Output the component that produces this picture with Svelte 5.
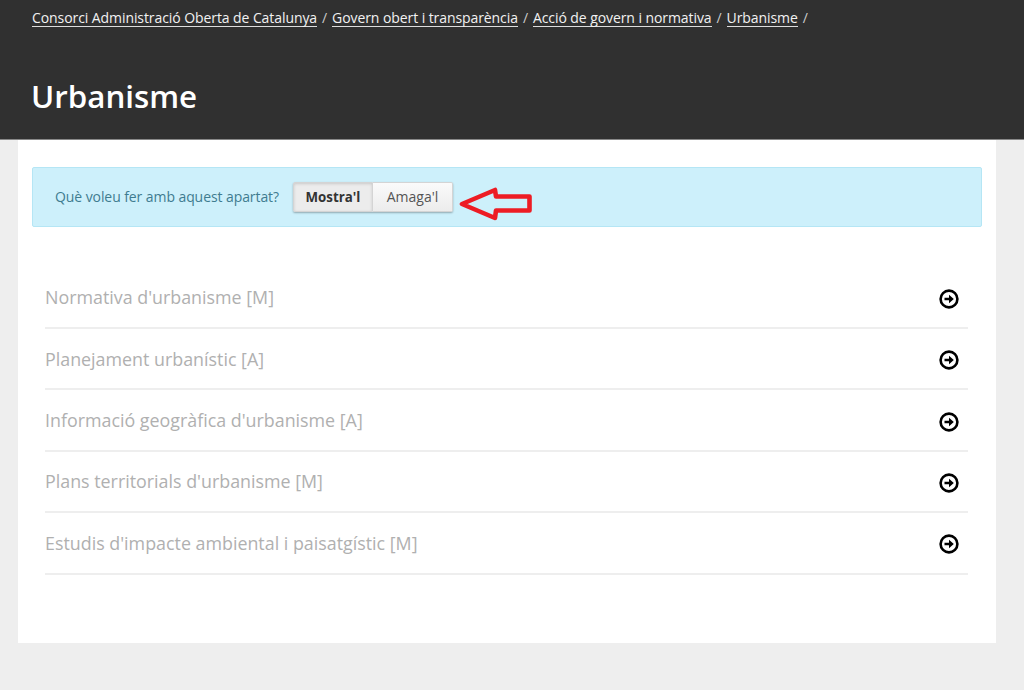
<script>
	const crumbs = [
		'Consorci Administració Oberta de Catalunya',
		'Govern obert i transparència',
		'Acció de govern i normativa',
		'Urbanisme'
	]

	const items = [
		"Normativa d'urbanisme [M]",
		'Planejament urbanístic [A]',
		"Informació geogràfica d'urbanisme [A]",
		"Plans territorials d'urbanisme [M]",
		"Estudis d'impacte ambiental i paisatgístic [M]"
	]
</script>

<header class="page-header">
	<nav class="breadcrumb">
		{#each crumbs as crumb}
			<a href="#top" class="crumb">{crumb}</a>
			<span class="sep">/</span>
		{/each}
	</nav>
	<h1>Urbanisme</h1>
</header>

<main class="content">
	<div class="notice">
		<span class="question">Què voleu fer amb aquest apartat?</span>
		<div class="btn-group">
			<button class="btn active">Mostra'l</button>
			<button class="btn">Amaga'l</button>
		</div>
		<svg class="arrow" width="78" height="40" viewBox="0 0 78 40" aria-hidden="true">
			<path d="M5 19 L38 5 L39 11.5 L72.5 11.5 L72.5 25.5 L39 25.5 L38 33 Z" fill="none" stroke="#ed1c24" stroke-width="4.6" stroke-linejoin="round" />
		</svg>
	</div>

	<ul class="list">
		{#each items as item}
			<li class="row">
				<span>{item}</span>
				<svg class="go" width="20" height="20" viewBox="0 0 20 20" aria-hidden="true">
					<circle cx="10" cy="10" r="8.4" fill="none" stroke="#000" stroke-width="2.6" />
					<path d="M5.5 8.7 H10 V5.8 L14.8 10 L10 14.2 V11.3 H5.5 Z" fill="#000" />
				</svg>
			</li>
		{/each}
	</ul>
</main>

<style>
	:global(body) {
		background: #eeeeee;
		font-family: 'Open Sans', sans-serif;
	}

	.page-header {
		box-sizing: border-box;
		height: 140px;
		padding: 9px 32px 0;
		background: #303030;
		border-bottom: 1px solid #888;
		color: #fff;
	}

	.breadcrumb {
		display: flex;
		align-items: flex-start;
		font-size: 14px;
		line-height: 17px;
		letter-spacing: -0.08px;
	}

	.crumb {
		color: #f2f2f2;
		text-decoration: none;
		border-bottom: 1px solid #ddd;
	}

	.sep {
		margin: 0 5px 0 5px;
		color: #ccc;
	}

	h1 {
		margin: 47px 0 0 -1px;
		font-size: 31.3px;
		line-height: 44px;
		font-weight: 600;
	}

	.content {
		box-sizing: border-box;
		width: 978px;
		height: 503px;
		margin-left: 18px;
		padding: 27px 14px 0;
		background: #fff;
	}

	.notice {
		box-sizing: border-box;
		display: flex;
		align-items: center;
		height: 60px;
		padding: 0 0 1px 22px;
		background: #cdf0fb;
		border: 1px solid #b5e6f5;
		border-radius: 2px;
	}

	.question {
		font-size: 14px;
		letter-spacing: -0.08px;
		color: #3f7c90;
		margin-right: 14px;
	}

	.btn-group {
		display: flex;
		box-shadow: 0 1px 2px rgba(0, 0, 0, 0.3);
		border-radius: 2px;
	}

	.btn {
		box-sizing: border-box;
		height: 30px;
		padding: 0;
		font-family: inherit;
		font-size: 14px;
		color: #555;
		background: linear-gradient(#fafafa, #ececec);
		border: 1px solid #d4d4d4;
		border-left: 0;
		border-radius: 0 2px 2px 0;
		width: 80px;
	}

	.btn.active {
		font-size: 13.3px;
		font-weight: 700;
		color: #333;
		background: #ececec;
		border-left: 1px solid #d4d4d4;
		border-radius: 2px 0 0 2px;
		box-shadow: inset 0 1px 3px rgba(0, 0, 0, 0.15);
	}

	.arrow {
		margin-left: 4px;
		margin-top: 17px;
	}

	.list {
		list-style: none;
		margin: 40.6px 14px 0 13px;
		padding: 0;
	}

	.row {
		box-sizing: border-box;
		display: flex;
		align-items: center;
		justify-content: space-between;
		height: 61.4px;
		padding: 0 9px 0 0;
		font-size: 17.85px;
		color: #b0b0b0;
		border-bottom: 2px solid #eeeeee;
	}

	.go {
		margin-top: 3px;
	}
</style>
